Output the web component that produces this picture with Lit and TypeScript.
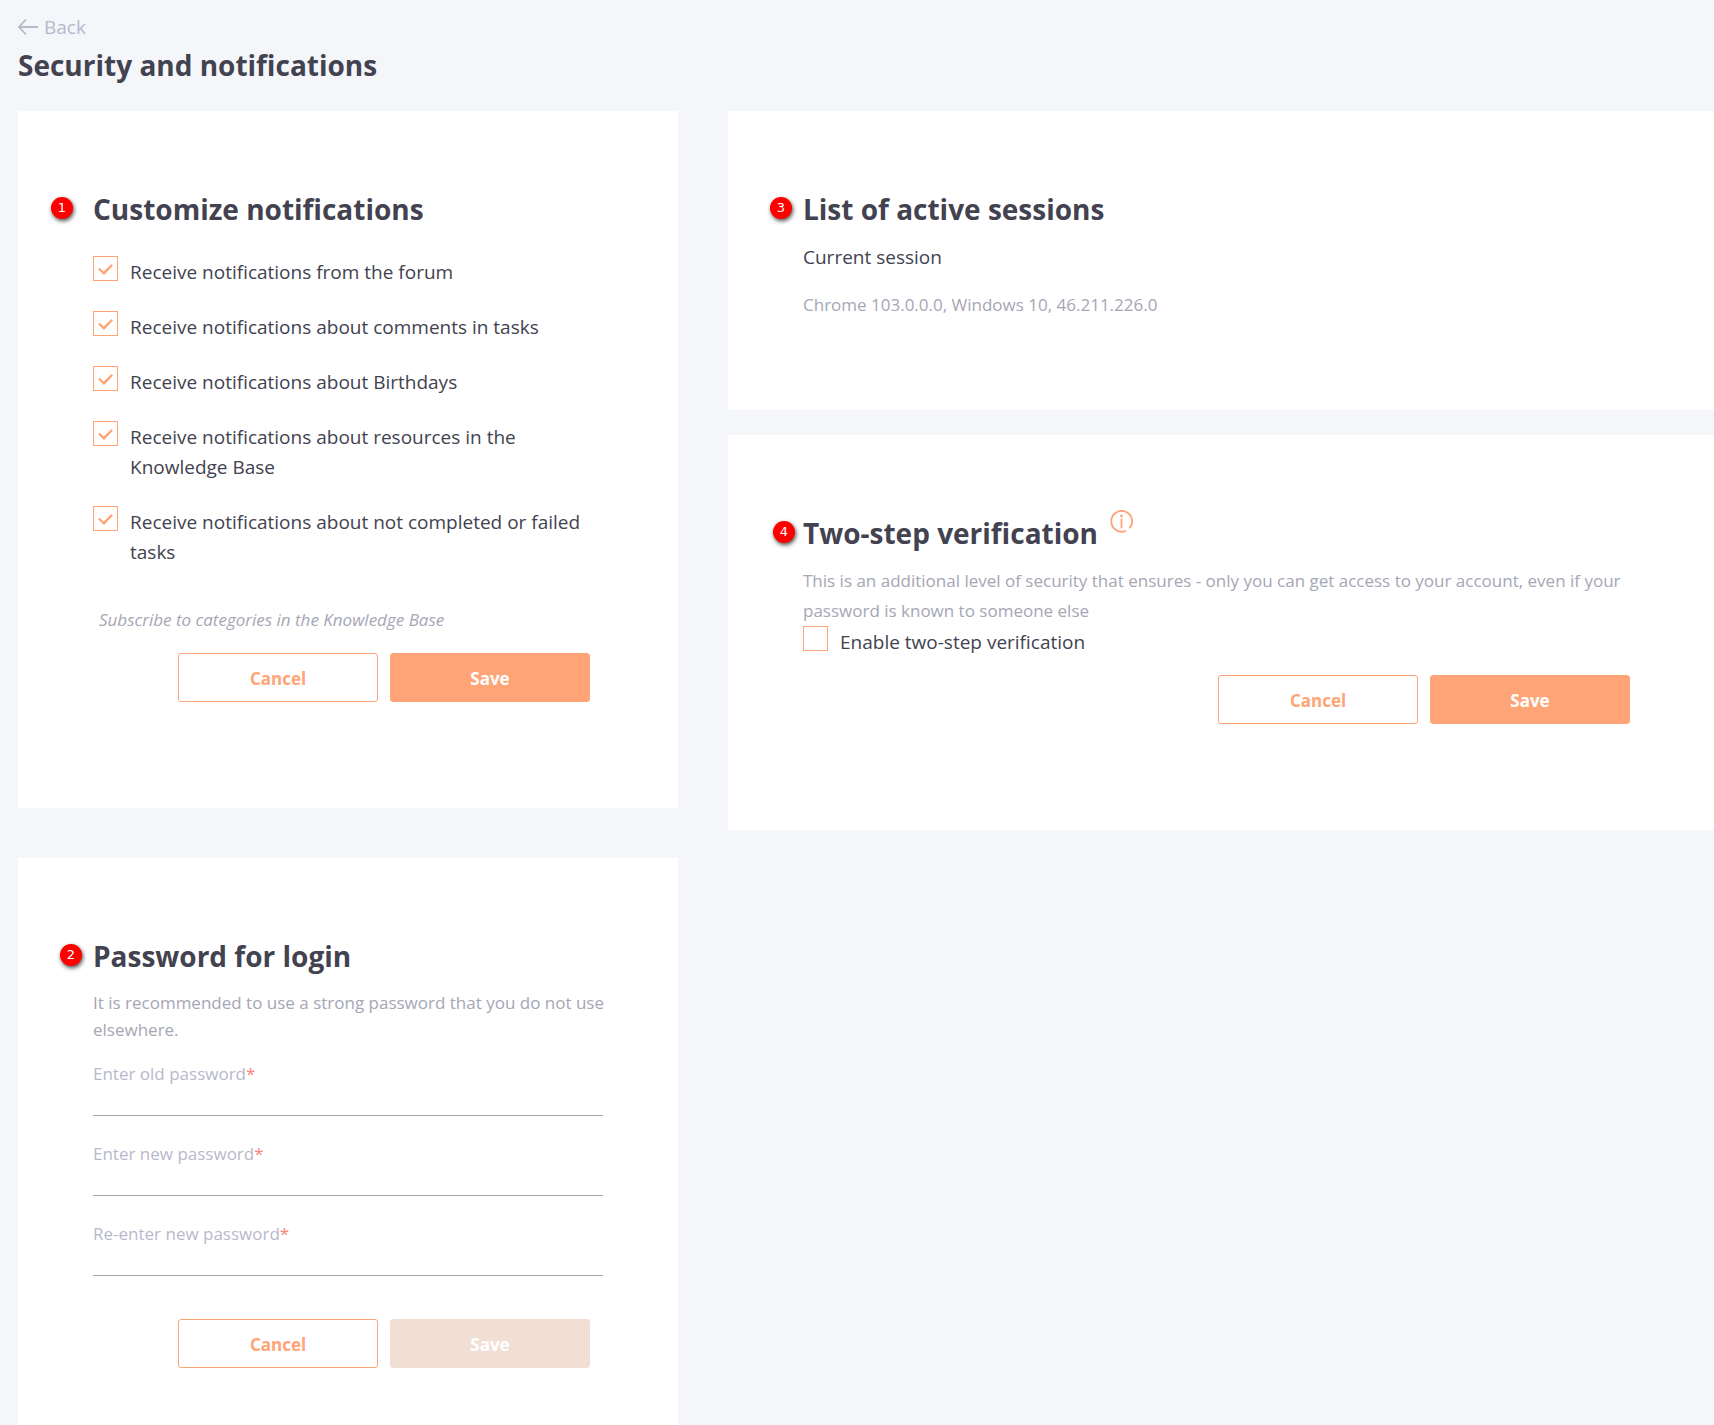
import { LitElement, html, css, svg, nothing } from "lit";
import { customElement, property, state } from "lit/decorators.js";

const palette = css`
  :host {
    --accent: #ffa477;
    --ink: #424250;
    --muted: #a6a6b5;
    --faint: #b8b8cb;
    --danger: #ff7f73;
    --line: #a5a5b0;
    --surface: #ffffff;
    --page: #f4f6fa;
    --disabled: #f1dfd6;
  }
  * {
    box-sizing: border-box;
  }
`;

const arrowIcon = svg`
  <path d="M20 10H1M8 2.5L1 10L8 17.5" fill="none" stroke="currentColor" stroke-width="1.8" />
`;

const infoIcon = svg`
  <path d="M15.5 21A10.4 10.4 0 1 1 20 17.6" fill="none" stroke="currentColor" stroke-width="1.8" stroke-linecap="round" />
  <path d="M11.5 9.5V17.5" stroke="currentColor" stroke-width="1.8" stroke-linecap="round" />
  <circle cx="11.5" cy="6" r="1.4" fill="currentColor" />
`;

@customElement("option-check")
class OptionCheck extends LitElement {
  @property() label = "";
  @property({ type: Boolean }) checked = false;

  static styles = [
    palette,
    css`
      :host {
        display: block;
      }
      .option {
        display: flex;
        align-items: flex-start;
        gap: 12px;
        cursor: pointer;
      }
      .box {
        appearance: none;
        flex: none;
        width: 25px;
        height: 25px;
        margin: 0;
        padding-top: 2px;
        border: 1px solid var(--accent);
        background: var(--surface);
        display: grid;
        place-items: center;
        cursor: pointer;
      }
      .box:checked::before {
        content: "";
        width: 15px;
        height: 11px;
        background: var(--accent);
        clip-path: polygon(0 48%, 10% 34%, 38% 68%, 90% 0, 100% 13%, 40% 100%);
      }
      .text {
        padding-top: 1px;
        font-size: 19px;
        line-height: 30px;
        color: var(--ink);
      }
    `,
  ];

  render() {
    return html`
      <label class="option">
        <input
          class="box"
          type="checkbox"
          .checked=${this.checked}
          @change=${(e: Event) => (this.checked = (e.target as HTMLInputElement).checked)}
        />
        <span class="text">${this.label}</span>
      </label>
    `;
  }
}

@customElement("password-field")
class PasswordField extends LitElement {
  @property() label = "";

  static styles = [
    palette,
    css`
      :host {
        display: block;
      }
      .label {
        display: block;
        font-size: 17px;
        line-height: 30px;
        color: var(--faint);
      }
      .required {
        color: var(--danger);
      }
      .input {
        display: block;
        width: 100%;
        height: 27px;
        padding: 0;
        border: 0;
        border-bottom: 1px solid var(--line);
        background: transparent;
        font: inherit;
        font-size: 17px;
        color: var(--ink);
        outline: none;
      }
    `,
  ];

  render() {
    return html`
      <label class="label" for="field">${this.label}<span class="required">*</span></label>
      <input class="input" id="field" type="password" required />
    `;
  }
}

@customElement("form-actions")
class FormActions extends LitElement {
  @property({ type: Boolean }) locked = false;

  static styles = [
    palette,
    css`
      :host {
        display: block;
      }
      .actions {
        display: flex;
        flex-wrap: wrap;
        justify-content: flex-end;
        gap: 12px;
        padding-right: 18px;
      }
      .button {
        width: 200px;
        height: 49px;
        padding: 2px 6px 0;
        border: 1px solid var(--accent);
        border-radius: 3px;
        background: var(--surface);
        color: var(--accent);
        font-family: inherit;
        font-size: 17px;
        font-weight: 700;
        cursor: pointer;
      }
      .primary {
        background: var(--accent);
        color: var(--surface);
      }
      .primary:disabled {
        background: var(--disabled);
        border-color: var(--disabled);
        cursor: default;
      }
    `,
  ];

  render() {
    return html`
      <div class="actions">
        <button class="button" type="button">Cancel</button>
        <button class="button primary" type="button" ?disabled=${this.locked}>Save</button>
      </div>
    `;
  }
}

@customElement("settings-card")
class SettingsCard extends LitElement {
  @property() heading = "";
  @property({ type: Number }) step = 0;
  /* Distance from the heading's left edge to the marker's centre. */
  @property({ type: Number }) reach = 22;
  @property({ type: Boolean }) info = false;

  static styles = [
    palette,
    css`
      :host {
        display: block;
        padding: 75px 70px 106px 75px;
        background: var(--surface);
      }
      .head {
        position: relative;
        display: flex;
        align-items: flex-start;
        gap: 12px;
      }
      .heading {
        margin: 0;
        font-size: 28px;
        line-height: 46px;
        font-weight: 700;
        color: var(--ink);
      }
      .marker {
        position: absolute;
        top: 11px;
        width: 22px;
        height: 22px;
        margin-left: -11px;
        border-radius: 50%;
        background: #ff0000;
        box-shadow: 1px 2px 4px rgba(0, 0, 0, 0.7);
        color: #ffffff;
        font-family: "DejaVu Sans", sans-serif;
        font-size: 13px;
        line-height: 22px;
        text-align: center;
      }
      .info {
        display: block;
        padding: 0;
        border: 0;
        background: none;
        color: var(--accent);
        cursor: pointer;
      }
      .icon {
        display: block;
      }
    `,
  ];

  render() {
    return html`
      <div class="head">
        <span class="marker" style="left: ${-this.reach}px">${this.step}</span>
        <h2 class="heading">${this.heading}</h2>
        ${this.info
          ? html`<button class="info" type="button" aria-label="More information">
              <svg class="icon" width="23" height="23" viewBox="0 0 23 23">${infoIcon}</svg>
            </button>`
          : nothing}
      </div>
      <slot></slot>
    `;
  }
}

@customElement("app-root")
class AppRoot extends LitElement {
  @state() private options = [
    "Receive notifications from the forum",
    "Receive notifications about comments in tasks",
    "Receive notifications about Birthdays",
    "Receive notifications about resources in the Knowledge Base",
    "Receive notifications about not completed or failed tasks",
  ];

  @state() private fields = ["Enter old password", "Enter new password", "Re-enter new password"];

  static styles = [
    palette,
    css`
      :host {
        display: flex;
        flex-direction: column;
        min-height: 100vh;
        overflow-x: clip;
        padding: 12px 0 0 18px;
        background: var(--page);
        font-family: "Segoe UI", "Open Sans", "Noto Sans", sans-serif;
      }
      .back {
        display: flex;
        align-items: center;
        align-self: flex-start;
        gap: 5px;
        font-size: 19px;
        line-height: 30px;
        color: var(--faint);
        text-decoration: none;
      }
      .title {
        margin: 0 0 23px;
        font-size: 28px;
        line-height: 46px;
        font-weight: 700;
        color: var(--ink);
      }
      .columns {
        flex: 1;
        display: grid;
        grid-template-columns: minmax(0, 2fr) minmax(0, 3fr);
        column-gap: 50px;
        margin-right: -4px;
      }
      .column {
        display: flex;
        flex-direction: column;
      }
      .main {
        gap: 50px;
      }
      .side {
        gap: 25px;
      }
      .rest {
        flex: 1;
        padding-bottom: 50px;
      }
      .short {
        padding-bottom: 90px;
      }
      .options {
        display: flex;
        flex-direction: column;
        gap: 24px;
        margin-top: 24px;
      }
      .subscribe {
        display: block;
        margin: 38px 0 0 6px;
        font-size: 17px;
        line-height: 30px;
        font-style: italic;
        color: var(--muted);
        text-decoration: none;
      }
      .actions {
        margin-top: 18px;
      }
      .text {
        margin: 10px 0 0;
        font-size: 17px;
        line-height: 30px;
        color: var(--muted);
      }
      .dense {
        line-height: 27px;
      }
      .session {
        margin: 10px 0 0;
        font-size: 19px;
        line-height: 30px;
        font-weight: 400;
        color: var(--ink);
      }
      .agent {
        margin-top: 18px;
      }
      .fields {
        display: flex;
        flex-direction: column;
        gap: 23px;
        margin: 16px 5px 43px 0;
      }
    `,
  ];

  render() {
    return html`
      <a class="back" href="#">
        <svg width="21" height="20" viewBox="0 0 21 20" aria-hidden="true">${arrowIcon}</svg>
        <span>Back</span>
      </a>
      <h1 class="title">Security and notifications</h1>
      <main class="columns">
        <div class="column main">
          <settings-card heading="Customize notifications" .step=${1} .reach=${31}>
            <div class="options">
              ${this.options.map((o) => html`<option-check .label=${o} checked></option-check>`)}
            </div>
            <a class="subscribe" href="#">Subscribe to categories in the Knowledge Base</a>
            <form-actions class="actions"></form-actions>
          </settings-card>
          <settings-card class="rest" heading="Password for login" .step=${2}>
            <p class="text dense">
              It is recommended to use a strong password that you do not use elsewhere.
            </p>
            <div class="fields">
              ${this.fields.map((f) => html`<password-field .label=${f}></password-field>`)}
            </div>
            <form-actions locked></form-actions>
          </settings-card>
        </div>
        <div class="column side">
          <settings-card class="short" heading="List of active sessions" .step=${3}>
            <h3 class="session">Current session</h3>
            <p class="text agent">Chrome 103.0.0.0, Windows 10, 46.211.226.0</p>
          </settings-card>
          <settings-card heading="Two-step verification" .step=${4} .reach=${19} info>
            <p class="text">
              This is an additional level of security that ensures - only you can get access to your
              account, even if your password is known to someone else
            </p>
            <option-check label="Enable two-step verification"></option-check>
            <form-actions class="actions"></form-actions>
          </settings-card>
        </div>
      </main>
    `;
  }
}
